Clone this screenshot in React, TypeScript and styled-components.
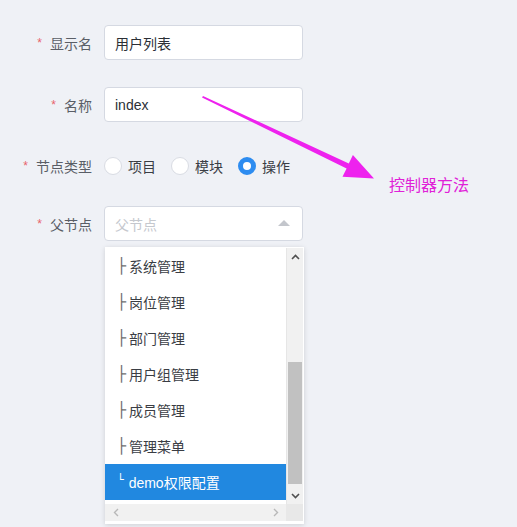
import styled, { createGlobalStyle } from 'styled-components';

const GlobalStyle = createGlobalStyle`
  html, body {
    margin: 0;
    padding: 0;
    background: #eff1f6;
  }
  * {
    box-sizing: border-box;
  }
`;

const treeItems = [
  { prefix: '├', name: '系统管理' },
  { prefix: '├', name: '岗位管理' },
  { prefix: '├', name: '部门管理' },
  { prefix: '├', name: '用户组管理' },
  { prefix: '├', name: '成员管理' },
  { prefix: '├', name: '管理菜单' },
  { prefix: '└', name: 'demo权限配置', selected: true },
];

const radios = [
  { label: '项目', checked: false },
  { label: '模块', checked: false },
  { label: '操作', checked: true },
];

const App = () => {
  return (
    <>
      <GlobalStyle />
      <Page>
        <Form>
          <FormRow $mb={27}>
            <Label>
              <Star>*</Star>显示名
            </Label>
            <Input defaultValue="用户列表" />
          </FormRow>
          <FormRow $mb={26}>
            <Label>
              <Star>*</Star>名称
            </Label>
            <Input defaultValue="index" />
          </FormRow>
          <FormRow $mb={23}>
            <Label>
              <Star>*</Star>节点类型
            </Label>
            <RadioGroup>
              {radios.map((r) => (
                <RadioItem key={r.label}>
                  <RadioCircle $checked={r.checked} />
                  <RadioText>{r.label}</RadioText>
                </RadioItem>
              ))}
            </RadioGroup>
          </FormRow>
          <FormRow $mb={0}>
            <Label>
              <Star>*</Star>父节点
            </Label>
            <SelectWrap>
              <SelectBox>
                <Placeholder>父节点</Placeholder>
                <Caret />
              </SelectBox>
              <Dropdown>
                <ListArea>
                  {treeItems.map((item) => (
                    <TreeItem key={item.name} $selected={!!item.selected}>
                      <Prefix $selected={!!item.selected}>{item.prefix}</Prefix>
                      {item.name}
                    </TreeItem>
                  ))}
                </ListArea>
                <VScroll>
                  <ScrollArrow>
                    <svg width="9" height="6" viewBox="0 0 9 6">
                      <path d="M1 5 L4.5 1.5 L8 5" fill="none" stroke="#505050" strokeWidth="1.6" />
                    </svg>
                  </ScrollArrow>
                  <VTrack>
                    <VThumb />
                  </VTrack>
                  <ScrollArrow>
                    <svg width="9" height="6" viewBox="0 0 9 6">
                      <path d="M1 1 L4.5 4.5 L8 1" fill="none" stroke="#505050" strokeWidth="1.6" />
                    </svg>
                  </ScrollArrow>
                </VScroll>
                <HScroll>
                  <ScrollArrow>
                    <svg width="6" height="9" viewBox="0 0 6 9">
                      <path d="M5 1 L1.5 4.5 L5 8" fill="none" stroke="#b8b8b8" strokeWidth="1.4" />
                    </svg>
                  </ScrollArrow>
                  <ScrollArrow>
                    <svg width="6" height="9" viewBox="0 0 6 9">
                      <path d="M1 1 L4.5 4.5 L1 8" fill="none" stroke="#b8b8b8" strokeWidth="1.4" />
                    </svg>
                  </ScrollArrow>
                </HScroll>
                <Corner />
              </Dropdown>
            </SelectWrap>
          </FormRow>
        </Form>

        <ArrowSvg width="517" height="527" viewBox="0 0 517 527">
          <polygon
            points="203,96 348.8,163.4 352.9,155 374,178.5 342.5,176.8 346.6,168.4 202,97.5"
            fill="#ee22ee"
          />
        </ArrowSvg>
        <Note>控制器方法</Note>
      </Page>
    </>
  );
};

export default App;

const Page = styled.div`
  position: relative;
  width: 517px;
  height: 527px;
  overflow: hidden;
  padding-top: 25px;
  font-family: 'Liberation Sans', 'Noto Sans CJK SC', sans-serif;
`;

const Form = styled.div`
  display: flex;
  flex-direction: column;
`;

const FormRow = styled.div<{ $mb: number }>`
  display: flex;
  align-items: center;
  height: 35px;
  margin-bottom: ${(p) => p.$mb}px;
`;

const Label = styled.div`
  width: 92px;
  margin-right: 12px;
  text-align: right;
  font-size: 14px;
  color: #5a5e66;
  white-space: nowrap;
`;

const Star = styled.span`
  color: #e8636b;
  font-size: 12px;
  margin-right: 8px;
  position: relative;
  top: -2px;
`;

const Input = styled.input`
  width: 199px;
  height: 35px;
  border: 1px solid #d5d9e2;
  border-radius: 4px;
  background: #fff;
  padding: 0 10px;
  font-family: 'Liberation Sans', 'Noto Sans CJK SC', sans-serif;
  font-size: 14px;
  color: #2b2f36;
  outline: none;
`;

const RadioGroup = styled.div`
  display: flex;
  align-items: center;
  gap: 15px;
`;

const RadioItem = styled.label`
  display: flex;
  align-items: center;
  gap: 6px;
`;

const RadioCircle = styled.span<{ $checked: boolean }>`
  display: inline-block;
  width: 18px;
  height: 18px;
  border-radius: 50%;
  background: #fff;
  border: ${(p) => (p.$checked ? '5px solid #2d8cf0' : '1px solid #d9dce3')};
`;

const RadioText = styled.span`
  font-size: 14px;
  color: #3a3d44;
`;

const SelectWrap = styled.div`
  position: relative;
  width: 199px;
`;

const SelectBox = styled.div`
  display: flex;
  align-items: center;
  justify-content: space-between;
  height: 35px;
  border: 1px solid #d5d9e2;
  border-radius: 4px;
  background: #fff;
  padding: 0 12px 0 10px;
`;

const Placeholder = styled.span`
  font-size: 14px;
  color: #c5c8ce;
`;

const Caret = styled.span`
  width: 0;
  height: 0;
  border-left: 6px solid transparent;
  border-right: 6px solid transparent;
  border-bottom: 6px solid #c3c6cc;
  margin-top: -1px;
`;

const Dropdown = styled.div`
  position: absolute;
  top: 41px;
  left: 1px;
  width: 199px;
  height: 277px;
  background: #fff;
  box-shadow: 0 1px 5px rgba(0, 0, 0, 0.14);
  display: grid;
  grid-template-columns: 1fr 17px;
  grid-template-rows: 256px 17px;
  padding: 1px 1px 3px 0;
`;

const ListArea = styled.div`
  display: flex;
  flex-direction: column;
  overflow: hidden;
`;

const TreeItem = styled.div<{ $selected: boolean }>`
  display: flex;
  align-items: center;
  height: 36px;
  flex-shrink: 0;
  padding-left: 13px;
  font-size: 14px;
  color: ${(p) => (p.$selected ? '#fff' : '#3a3d44')};
  background: ${(p) => (p.$selected ? '#2188e0' : 'transparent')};
`;

const Prefix = styled.span<{ $selected: boolean }>`
  font-family: 'DejaVu Sans', sans-serif;
  font-size: ${(p) => (p.$selected ? '11px' : '15px')};
  color: ${(p) => (p.$selected ? '#fff' : '#6e6e6e')};
  margin-right: ${(p) => (p.$selected ? '4px' : '2px')};
  position: relative;
  left: -1px;
  top: ${(p) => (p.$selected ? '-3px' : '0')};
`;

const VScroll = styled.div`
  display: flex;
  flex-direction: column;
  background: #f1f1f1;
  border-left: 1px solid #e6e6e6;
`;

const ScrollArrow = styled.div`
  width: 17px;
  height: 17px;
  display: flex;
  align-items: center;
  justify-content: center;
  flex-shrink: 0;
`;

const VTrack = styled.div`
  flex: 1;
  display: flex;
  flex-direction: column;
  justify-content: flex-end;
  padding: 0 1px 3px 1px;
`;

const VThumb = styled.div`
  height: 122px;
  background: #c1c1c1;
`;

const HScroll = styled.div`
  display: flex;
  align-items: center;
  justify-content: space-between;
  background: #f1f1f1;
  padding: 0 2px;
`;

const Corner = styled.div`
  background: #e8e8e8;
`;

const ArrowSvg = styled.svg`
  position: absolute;
  top: 0;
  left: 0;
  pointer-events: none;
`;

const Note = styled.div`
  position: absolute;
  left: 389px;
  top: 172px;
  font-family: 'Noto Sans CJK SC', sans-serif;
  font-size: 16px;
  color: #e021d8;
`;
